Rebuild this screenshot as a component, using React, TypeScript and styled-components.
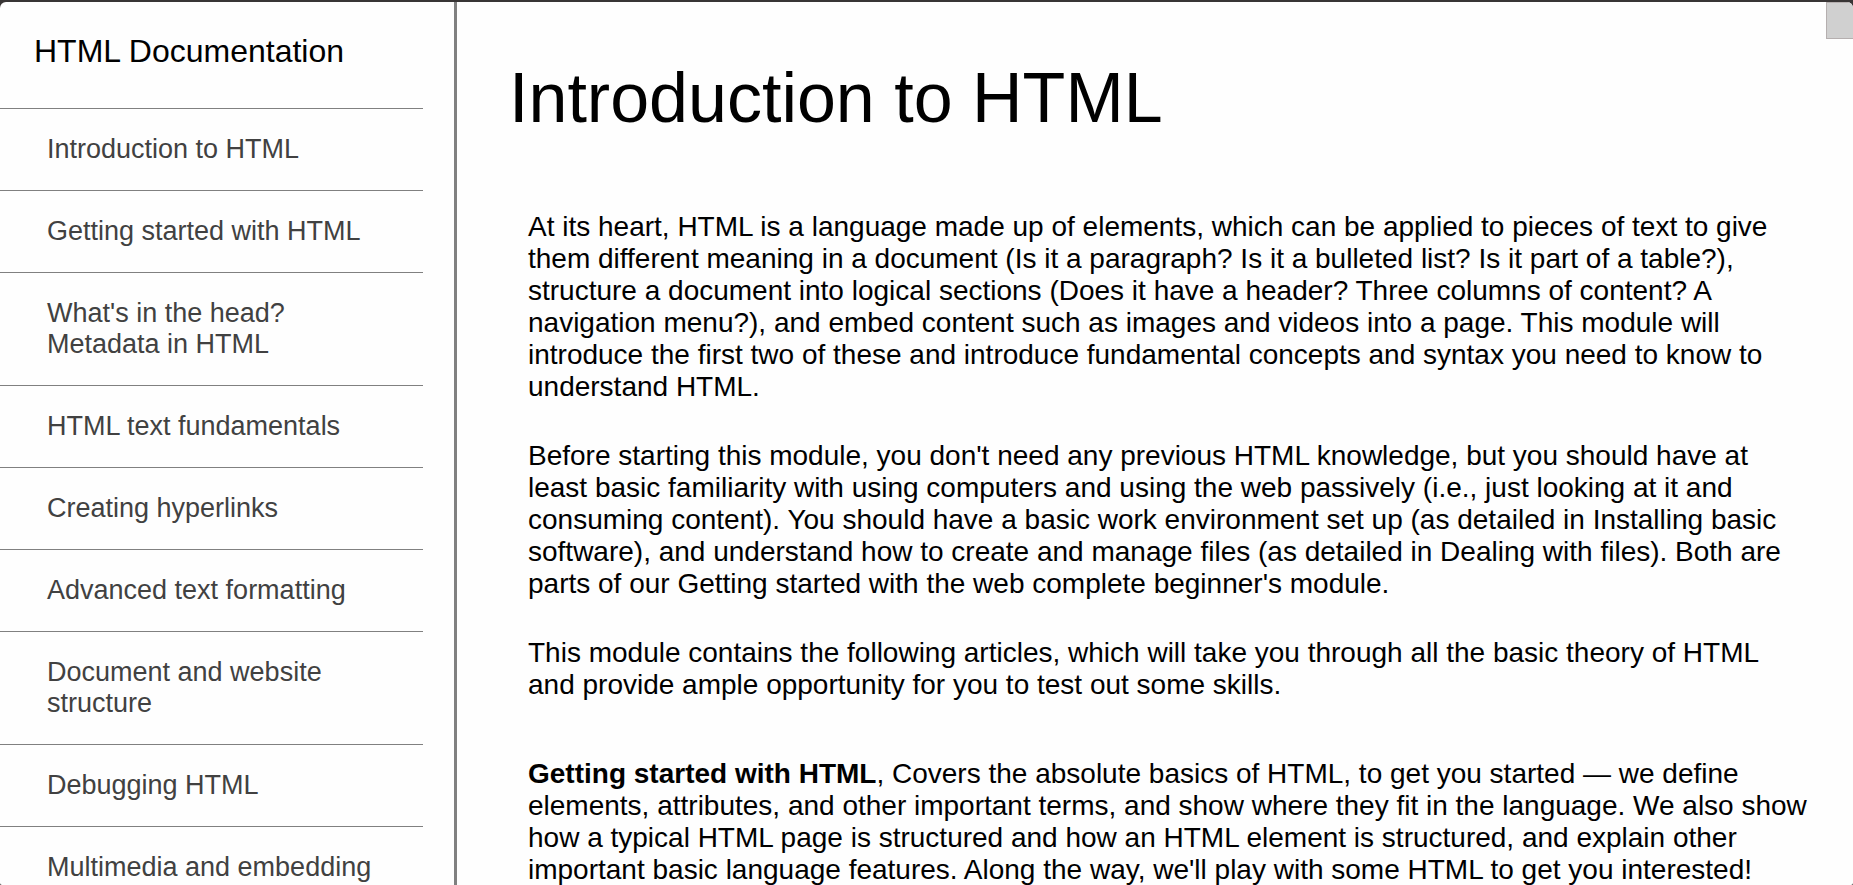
import React from "react";
import styled, { createGlobalStyle } from "styled-components";

const GlobalStyle = createGlobalStyle`
  *, *::before, *::after {
    box-sizing: border-box;
  }

  body {
    margin: 0;
    background: #383535;
    color: #000;
    font-family: "Liberation Sans", Arial, sans-serif;
  }
`;

const Frame = styled.div`
  height: 100vh;
  padding-top: 2px;
  overflow: hidden;
`;

const Page = styled.div`
  position: relative;
  display: flex;
  height: 100%;
  overflow: hidden;
  border-radius: 6px 6px 2px 2px;
  background: #fefefe;
`;

const Sidebar = styled.nav`
  flex: 0 0 457px;
  padding-right: 31px;
  border-right: 3px solid #808080;
  overflow: hidden;
`;

const SidebarTitle = styled.header`
  padding: 31px 34px 38px;
  font-size: 32px;
  line-height: 37px;
`;

const NavList = styled.ul`
  margin: 0;
  padding: 0;
  list-style: none;
`;

const NavItem = styled.li`
  border-top: 1px solid #808080;
`;

const NavLink = styled.a`
  display: block;
  padding: 25px 47px;
  color: #414141;
  font-size: 27px;
  line-height: 31px;
  text-decoration: none;
`;

const Main = styled.main`
  flex: 1;
  min-width: 0;
  padding: 56px 44px 0 52px;
`;

const Heading = styled.h1`
  margin: 0 0 73px;
  font-size: 70px;
  font-weight: 400;
  line-height: 80px;
`;

const Intro = styled.div`
  margin: 0 0 57px 19px;
`;

const Paragraph = styled.p`
  margin: 0;
  font-size: 28px;
  line-height: 32px;

  & + & {
    margin-top: 37px;
  }
`;

const Articles = styled.div`
  margin-left: 19px;
`;

const CornerBox = styled.div`
  position: absolute;
  top: 0;
  right: 0;
  width: 27px;
  height: 37px;
  border: 1px solid #b5afaf;
  border-right: 0;
  background: #d0d0d0;
`;

const links = [
  "Introduction to HTML",
  "Getting started with HTML",
  "What's in the head? Metadata in HTML",
  "HTML text fundamentals",
  "Creating hyperlinks",
  "Advanced text formatting",
  "Document and website structure",
  "Debugging HTML",
  "Multimedia and embedding",
];

const toId = (label: string) => label.toLowerCase().replace(/[^a-z]+/g, "-");

export default function App() {
  return (
    <Frame>
      <GlobalStyle />
      <Page>
        <Sidebar aria-label="Documentation">
          <SidebarTitle>HTML Documentation</SidebarTitle>
          <NavList>
            {links.map((label) => (
              <NavItem key={label}>
                <NavLink href={`#${toId(label)}`}>{label}</NavLink>
              </NavItem>
            ))}
          </NavList>
        </Sidebar>
        <Main>
          <Heading id="introduction-to-html">Introduction to HTML</Heading>
          <Intro>
            <Paragraph>
              At its heart, HTML is a language made up of elements, which can be
              applied to pieces of text to give them different meaning in a
              document (Is it a paragraph? Is it a bulleted list? Is it part of
              a table?), structure a document into logical sections (Does it
              have a header? Three columns of content? A navigation menu?), and
              embed content such as images and videos into a page. This module
              will introduce the first two of these and introduce fundamental
              concepts and syntax you need to know to understand HTML.
            </Paragraph>
            <Paragraph>
              Before starting this module, you don't need any previous HTML
              knowledge, but you should have at least basic familiarity with
              using computers and using the web passively (i.e., just looking at
              it and consuming content). You should have a basic work
              environment set up (as detailed in Installing basic software), and
              understand how to create and manage files (as detailed in Dealing
              with files). Both are parts of our Getting started with the web
              complete beginner's module.
            </Paragraph>
            <Paragraph>
              This module contains the following articles, which will take you
              through all the basic theory of HTML and provide ample opportunity
              for you to test out some skills.
            </Paragraph>
          </Intro>
          <Articles>
            <Paragraph>
              <strong>Getting started with HTML</strong>, Covers the absolute
              basics of HTML, to get you started — we define elements,
              attributes, and other important terms, and show where they fit in
              the language. We also show how a typical HTML page is structured
              and how an HTML element is structured, and explain other important
              basic language features. Along the way, we'll play with some HTML
              to get you interested!
            </Paragraph>
          </Articles>
        </Main>
        <CornerBox />
      </Page>
    </Frame>
  );
}
